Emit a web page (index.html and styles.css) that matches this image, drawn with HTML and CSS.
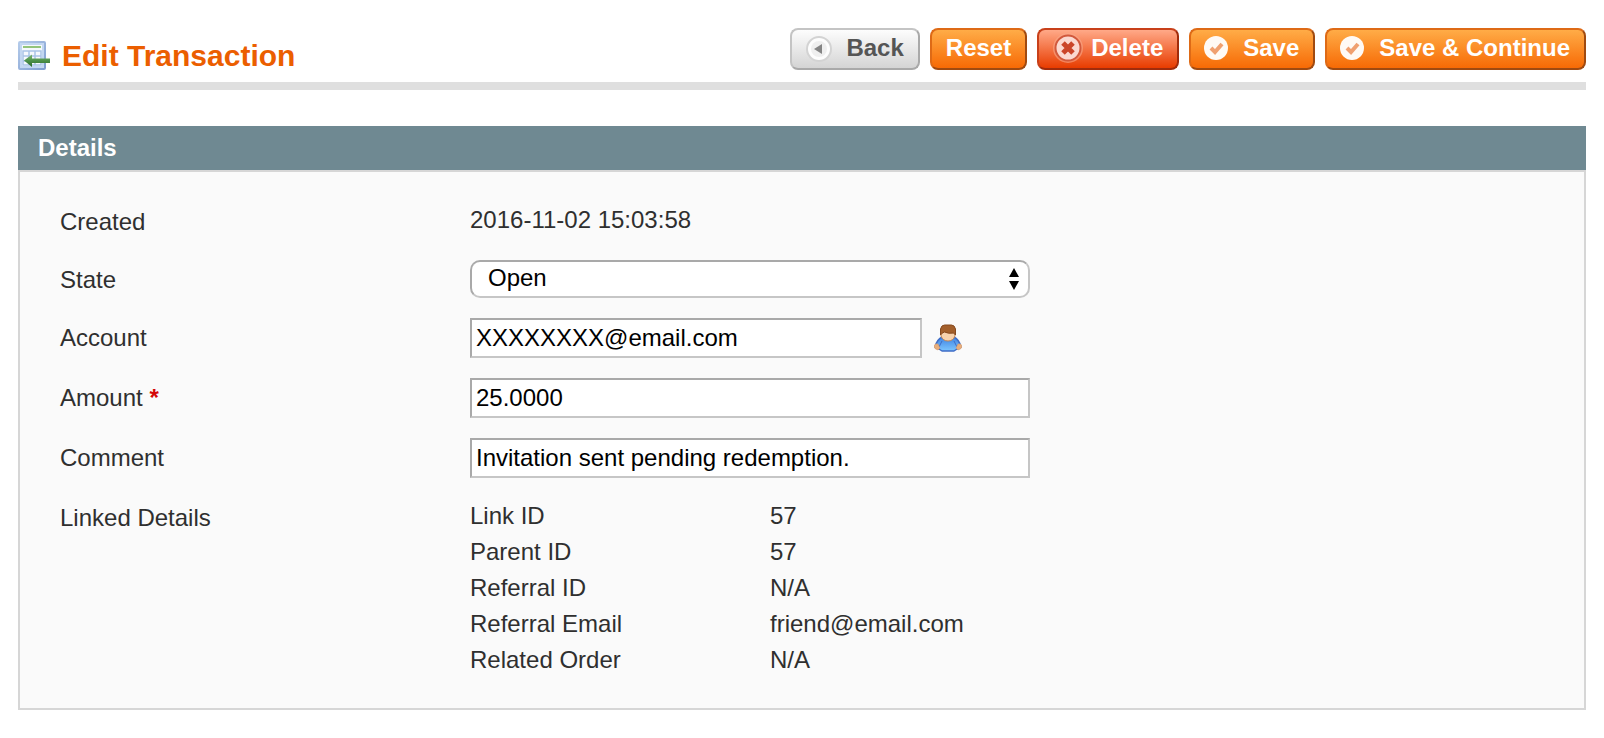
FILE: index.html
```html
<!DOCTYPE html>
<html lang="en">
<head>
  <meta charset="UTF-8" />
  <meta name="viewport" content="width=device-width, initial-scale=1.0"/>
  <title>Edit Transaction</title>
  <link rel="stylesheet" href="styles.css">
</head>
<body>
  <header class="content-header">
    <h1>
      <svg class="head-icon" viewBox="0 0 32 32" aria-hidden="true">
        <defs>
          <linearGradient id="arrow" x1="0" x2="0" y1="0" y2="1">
            <stop offset="0" stop-color="#7db873"/>
            <stop offset="0.5" stop-color="#4d9149"/>
            <stop offset="1" stop-color="#2c6a2b"/>
          </linearGradient>
          <linearGradient id="frame" x1="0" x2="1" y1="0" y2="1">
            <stop offset="0" stop-color="#b4cbea"/>
            <stop offset="1" stop-color="#7f9dd0"/>
          </linearGradient>
        </defs>
        <rect x="1" y="2" width="26" height="27" rx="1" fill="#f6f9fd" stroke="url(#frame)" stroke-width="2"/>
        <rect x="3" y="4" width="22" height="23" fill="none" stroke="#c3d7f1" stroke-width="2"/>
        <rect x="5" y="6" width="18" height="2" fill="#93c47c"/>
        <path d="M5 11h18v14H5zM5 16h18M5 21h18M11 11v14M17 11v14" fill="none" stroke="#a9c3e6" stroke-width="1.5"/>
        <path d="M6 20.5l8-6v4h18v4.500H14v4z" fill="url(#arrow)"/>
      </svg>
      Edit Transaction
    </h1>
    <div class="form-buttons">
      <button type="button" class="btn btn-back">
        <svg class="btn-icon" viewBox="0 0 40 34" aria-hidden="true">
          <circle cx="13" cy="19" r="12" fill="#fdfdfd" stroke="#d3d3d3" stroke-width="2"/>
          <circle cx="13" cy="19" r="8" fill="#efefef"/>
          <path d="M8 19l8-5v10z" fill="#858585"/>
        </svg>
        Back
      </button>
      <button type="reset" form="transactionForm" class="btn">Reset</button>
      <button type="button" class="btn btn-delete">
        <svg class="btn-icon" viewBox="0 0 40 34" aria-hidden="true">
          <circle cx="17" cy="18" r="15" fill="#f9a98a" opacity="0.6"/>
          <circle cx="17" cy="18" r="12.500" fill="#fbd9d0" stroke="#d2593c" stroke-width="2"/>
          <path d="M12 13l10 10M22 13l-10 10" fill="none" stroke="#cb4629" stroke-width="5"/>
        </svg>
        Delete
      </button>
      <button type="submit" form="transactionForm" class="btn btn-save">
        <svg class="btn-icon" viewBox="0 0 40 34" aria-hidden="true">
          <circle cx="13" cy="18" r="12" fill="#fffaf5"/>
          <path d="M8 18l4 4 7-8" fill="none" stroke="#f0a070" stroke-width="4"/>
        </svg>
        Save
      </button>
      <button type="submit" form="transactionForm" class="btn btn-save">
        <svg class="btn-icon" viewBox="0 0 40 34" aria-hidden="true">
          <circle cx="13" cy="18" r="12" fill="#fffaf5"/>
          <path d="M8 18l4 4 7-8" fill="none" stroke="#f0a070" stroke-width="4"/>
        </svg>
        Save &amp; Continue
      </button>
    </div>
  </header>

  <section class="entry-edit">
    <h2>Details</h2>
    <form id="transactionForm" class="fieldset">
      <div class="row">
        <span class="label">Created</span>
        <div class="value">2016-11-02 15:03:58</div>
      </div>
      <div class="row">
        <label class="label" for="state">State</label>
        <div class="value select-wrap">
          <select id="state">
            <option selected>Open</option>
          </select>
          <svg class="select-arrows" viewBox="0 0 12 24" aria-hidden="true">
            <path d="M1 10l5-9 5 9zM1 14h10l-5 9z"/>
          </svg>
        </div>
      </div>
      <div class="row">
        <label class="label" for="account">Account</label>
        <div class="value account">
          <input type="text" id="account" value="XXXXXXXX@email.com"/>
          <svg class="user-icon" viewBox="0 0 28 28" aria-hidden="true">
            <defs>
              <linearGradient id="shirt" x1="0" x2="0" y1="0" y2="1">
                <stop offset="0" stop-color="#3f82e2"/>
                <stop offset="1" stop-color="#7cc6ff"/>
              </linearGradient>
            </defs>
            <path d="M8 13C4 15 2 19 1 23l4 2 3 2h12l3-2 4-2c-1-4-3-8-7-10z" fill="url(#shirt)" stroke="#3f6cc6" stroke-width="1.500" stroke-linejoin="round"/>
            <path d="M8 17l-3 6M20 17l3 6" fill="none" stroke="#3f6cc6"/>
            <path d="M0 22q1-3 4-2l2 4-2 2q-4-1-4-4zM28 22q-1-3-4-2l-2 4 2 2q4-1 4-4z" fill="#e8ae7c" stroke="#cf9468" stroke-width="0.500"/>
            <path d="M7 7h14v5q-2 5-7 5t-7-5z" fill="#f7d2ad" stroke="#c08453" stroke-width="1"/>
            <path d="M6.500 11V5q1-4 4-4h7q3 0 4 4v6l-2-2q-5 1-9-1-3 1-4 3z" fill="#a35f2b" stroke="#86491f" stroke-width="1"/>
          </svg>
        </div>
      </div>
      <div class="row">
        <label class="label" for="amount">Amount <span class="required">*</span></label>
        <div class="value">
          <input type="text" id="amount" value="25.0000"/>
        </div>
      </div>
      <div class="row">
        <label class="label" for="comment">Comment</label>
        <div class="value">
          <input type="text" id="comment" value="Invitation sent pending redemption."/>
        </div>
      </div>
      <div class="row">
        <span class="label">Linked Details</span>
        <div class="value">
          <table class="linked">
            <tr><th scope="row">Link ID</th><td>57</td></tr>
            <tr><th scope="row">Parent ID</th><td>57</td></tr>
            <tr><th scope="row">Referral ID</th><td>N/A</td></tr>
            <tr><th scope="row">Referral Email</th><td>friend@email.com</td></tr>
            <tr><th scope="row">Related Order</th><td>N/A</td></tr>
          </table>
        </div>
      </div>
    </form>
  </section>
</body>
</html>
```

FILE: styles.css
```css
* {
  box-sizing: border-box;
}

body {
  margin: 0;
  padding: 28px 18px;
  background: #fff;
  color: #2f2f2f;
  font: 24px/36px Arial, "Liberation Sans", sans-serif;
}

/* Page header */
.content-header {
  display: flex;
  justify-content: space-between;
  align-items: flex-start;
  padding-bottom: 8px;
  border-bottom: 8px solid #dfdfdf;
  margin-bottom: 36px;
}

.content-header h1 {
  display: flex;
  align-items: center;
  gap: 12px;
  margin: 10px 0 0;
  color: #eb5e00;
  font-size: 30px;
}

.head-icon {
  width: 32px;
  height: 32px;
}

.form-buttons {
  display: flex;
  gap: 10px;
}

.btn {
  display: flex;
  align-items: flex-start;
  padding: 0 14px 2px;
  border: 2px solid;
  border-color: #de6a16 #a04a10 #a04a10 #de6a16;
  border-radius: 8px;
  background: linear-gradient(#ffac47, #f76a05);
  color: #fff;
  font: bold 24px/36px Arial, "Liberation Sans", sans-serif;
  white-space: nowrap;
  cursor: pointer;
}

.btn-back {
  border-color: #c4c4c4 #a9a9a9 #a9a9a9 #c4c4c4;
  background: linear-gradient(#fdfdfd, #d4d4d4);
  color: #555;
}

.btn-delete,
.btn-save {
  padding-left: 12px;
}

.btn-delete {
  border-color: #c8401a #a02c0c #a02c0c #c8401a;
  background: linear-gradient(#ffa988, #e83c00);
}

.btn-icon {
  width: 40px;
  height: 34px;
}

/* Details box */
.entry-edit h2 {
  margin: 0;
  padding: 4px 20px;
  background: #6f8992;
  color: #fff;
  font-size: 24px;
}

.fieldset {
  padding: 20px 20px 20px 40px;
  border: 2px solid #d6d6d6;
  background: #fafafa;
}

.row {
  display: grid;
  grid-template-columns: 410px minmax(0, 560px);
}

.label {
  padding: 12px 0 10px;
}

.value {
  padding: 10px 0;
}

.required {
  color: #d40707;
  font-weight: bold;
}

input,
select {
  display: block;
  width: 100%;
  height: 40px;
  margin: 0;
  padding: 0 4px;
  border: 2px solid;
  border-color: #a9a9a9 #c6c6c6 #c6c6c6 #a9a9a9;
  border-radius: 0;
  background: #fff;
  color: #000;
  font: 24px Arial, "Liberation Sans", sans-serif;
}

.select-wrap {
  position: relative;
}

select {
  height: 38px;
  padding: 0 30px 4px 16px;
  border-radius: 10px;
  appearance: none;
}

.select-arrows {
  position: absolute;
  top: 17px;
  right: 10px;
  width: 12px;
  height: 24px;
  pointer-events: none;
}

.account {
  display: flex;
  align-items: center;
  gap: 12px;
}

.account input {
  width: 452px;
}

.user-icon {
  width: 28px;
  height: 28px;
}

.linked {
  width: 100%;
  border-collapse: collapse;
}

.linked th,
.linked td {
  padding: 0;
  font-weight: normal;
  text-align: left;
}

.linked th {
  width: 300px;
}
```
